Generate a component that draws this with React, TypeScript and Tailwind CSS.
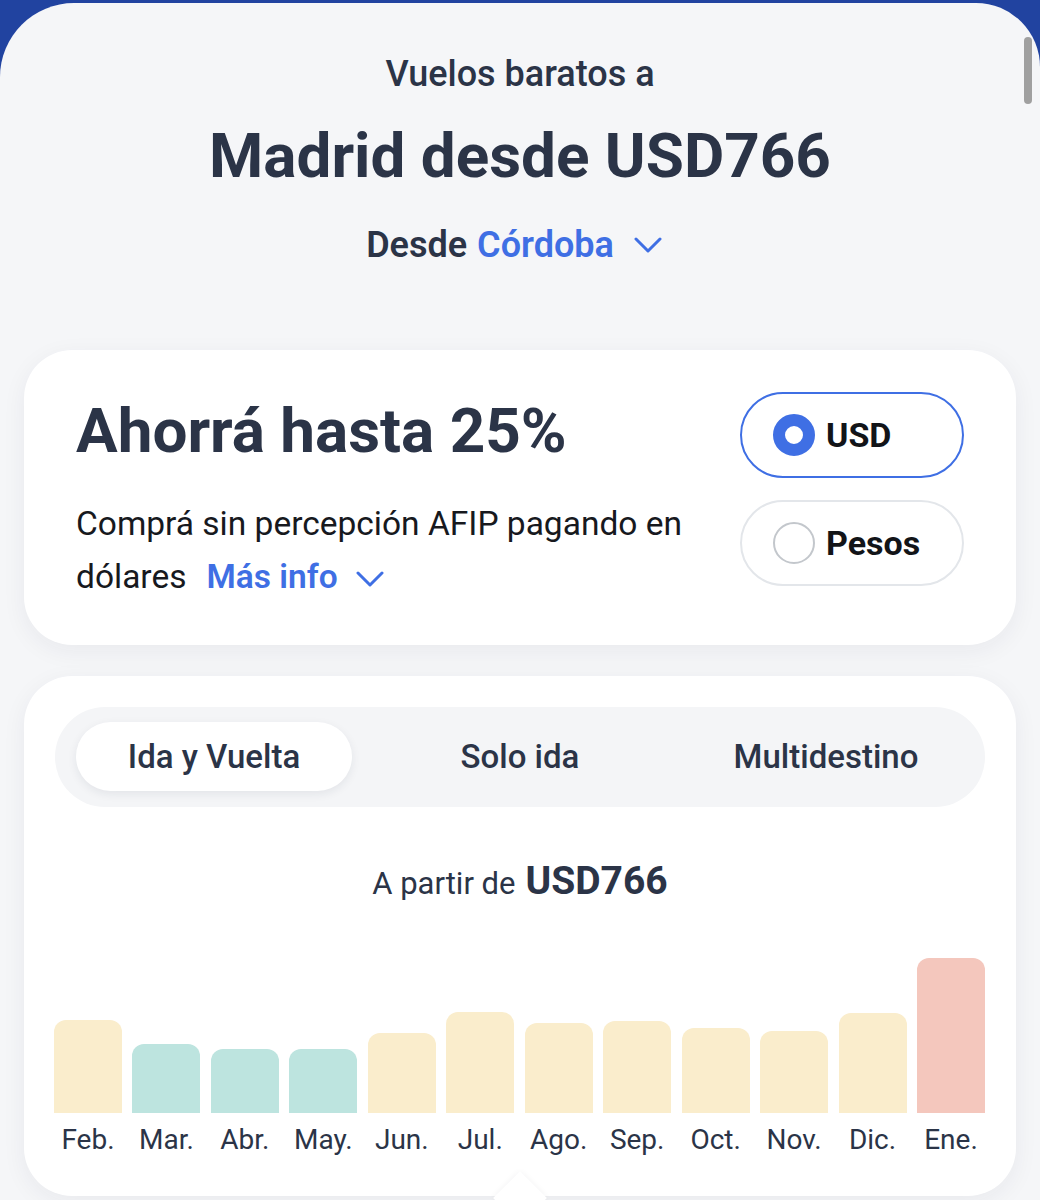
import React from "react";

type Bar = { month: string; height: number; tone: "cheap" | "mid" | "high" };

const bars: Bar[] = [
  { month: "Feb.", height: 93, tone: "mid" },
  { month: "Mar.", height: 69, tone: "cheap" },
  { month: "Abr.", height: 64, tone: "cheap" },
  { month: "May.", height: 64, tone: "cheap" },
  { month: "Jun.", height: 80, tone: "mid" },
  { month: "Jul.", height: 101, tone: "mid" },
  { month: "Ago.", height: 90, tone: "mid" },
  { month: "Sep.", height: 92, tone: "mid" },
  { month: "Oct.", height: 85, tone: "mid" },
  { month: "Nov.", height: 82, tone: "mid" },
  { month: "Dic.", height: 100, tone: "mid" },
  { month: "Ene.", height: 155, tone: "high" },
];

const toneClass: Record<Bar["tone"], string> = {
  cheap: "bg-[#bde4df]",
  mid: "bg-[#faedcc]",
  high: "bg-[#f4c7bd]",
};

function Chevron({ className }: { className?: string }) {
  return (
    <svg viewBox="0 0 28 16" width="28" height="16" fill="none" className={className}>
      <polyline
        points="2,2 14,14 26,2"
        stroke="currentColor"
        strokeWidth="3"
        strokeLinecap="round"
        strokeLinejoin="round"
      />
    </svg>
  );
}

function CurrencyOption({ label, selected }: { label: string; selected?: boolean }) {
  return (
    <div
      className={
        selected
          ? "flex items-center gap-[11px] w-[224px] h-[86px] pl-[31px] rounded-full border-2 border-[#3f6fe4] bg-white"
          : "flex items-center gap-[11px] w-[224px] h-[86px] pl-[31px] rounded-full border-2 border-[#e3e6ea] bg-white"
      }
    >
      {selected ? (
        <span className="w-[42px] h-[42px] rounded-full border-[12px] border-[#3f6fe4] bg-white" />
      ) : (
        <span className="w-[42px] h-[42px] rounded-full border-2 border-[#c3c7cc] bg-white" />
      )}
      <span className="text-[34px] leading-none font-bold text-[#121418]">{label}</span>
    </div>
  );
}

export default function App() {
  return (
    <div className="w-[1040px] h-[1200px] overflow-hidden bg-[#2143a0] pt-[3px] font-['Roboto',sans-serif]">
      <div className="relative h-[1197px] bg-[#f5f6f8] rounded-tl-[74px] rounded-tr-[64px]">
        {/* scrollbar */}
        <div className="absolute right-[8px] top-[34px] w-[8px] h-[67px] rounded-full bg-[#a0a0a0]" />

        {/* Header */}
        <div className="flex flex-col items-center pt-[53px] text-[#2b3447]">
          <p className="text-[36px] leading-none font-medium">Vuelos baratos a</p>
          <h1 className="mt-[33px] text-[62px] leading-none font-bold">Madrid desde USD766</h1>
          <div className="mt-[40px] pr-[12px] flex items-center text-[36px] leading-none font-semibold">
            <span>Desde</span>
            <span className="ml-[10px] text-[#3f6fe4]">Córdoba</span>
            <Chevron className="ml-[20px] text-[#3f6fe4]" />
          </div>
        </div>

        {/* Savings card */}
        <div className="mx-[24px] mt-[87px] flex justify-between px-[52px] rounded-[48px] bg-white shadow-[0_6px_24px_rgba(30,40,60,0.06)]">
          <div className="pt-[50px] pb-[42px] w-[630px]">
            <h2 className="text-[62px] leading-none font-bold text-[#2b3447]">Ahorrá hasta 25%</h2>
            <p className="mt-[35px] text-[33.5px] leading-[53px] text-[#17191e]">
              Comprá sin percepción AFIP pagando en dólares
              <span className="ml-[20px] font-semibold text-[#3f6fe4]">Más info</span>
              <Chevron className="inline ml-[18px] align-middle text-[#3f6fe4]" />
            </p>
          </div>
          <div className="pt-[42px] flex flex-col gap-[22px]">
            <CurrencyOption label="USD" selected />
            <CurrencyOption label="Pesos" />
          </div>
        </div>

        {/* Price calendar card */}
        <div className="relative mx-[24px] mt-[31px] px-[31px] pt-[31px] pb-[42px] rounded-[48px] bg-white shadow-[0_6px_24px_rgba(30,40,60,0.06)]">
          <div className="flex h-[100px] px-[6px] rounded-full bg-[#f4f5f7]">
            {["Ida y Vuelta", "Solo ida", "Multidestino"].map((tab, i) => (
              <div key={tab} className="flex-1 p-[15px]">
                <div
                  className={
                    i === 0
                      ? "h-[69px] flex items-center justify-center rounded-full bg-white shadow-[0_3px_10px_rgba(30,40,60,0.08)] text-[33px] font-medium text-[#2b3447]"
                      : "h-[69px] flex items-center justify-center text-[33px] font-medium text-[#2b3447]"
                  }
                >
                  {tab}
                </div>
              </div>
            ))}
          </div>

          <div className="mt-[55px] flex items-baseline justify-center text-[#2b3447]">
            <span className="text-[31px] leading-none">A partir de</span>
            <span className="ml-[10px] text-[39px] leading-none font-bold">USD766</span>
          </div>

          <div className="mt-[57px] grid grid-cols-12 gap-x-[10.5px] -ml-px">
            {bars.map((b) => (
              <div key={b.month} className="flex flex-col items-center">
                <div className="h-[155px] w-full flex items-end">
                  <div
                    className={`w-full rounded-t-[12px] ${toneClass[b.tone]}`}
                    style={{ height: b.height }}
                  />
                </div>
                <span className="mt-[13px] text-[28px] leading-none text-[#2b3447]">{b.month}</span>
              </div>
            ))}
          </div>

          {/* tooltip notch */}
          <div className="absolute left-1/2 -translate-x-1/2 bottom-[-21px] w-[38px] h-[38px] rotate-45 bg-white shadow-[0_0_6px_rgba(30,40,60,0.05)]" />
        </div>
      </div>
    </div>
  );
}
